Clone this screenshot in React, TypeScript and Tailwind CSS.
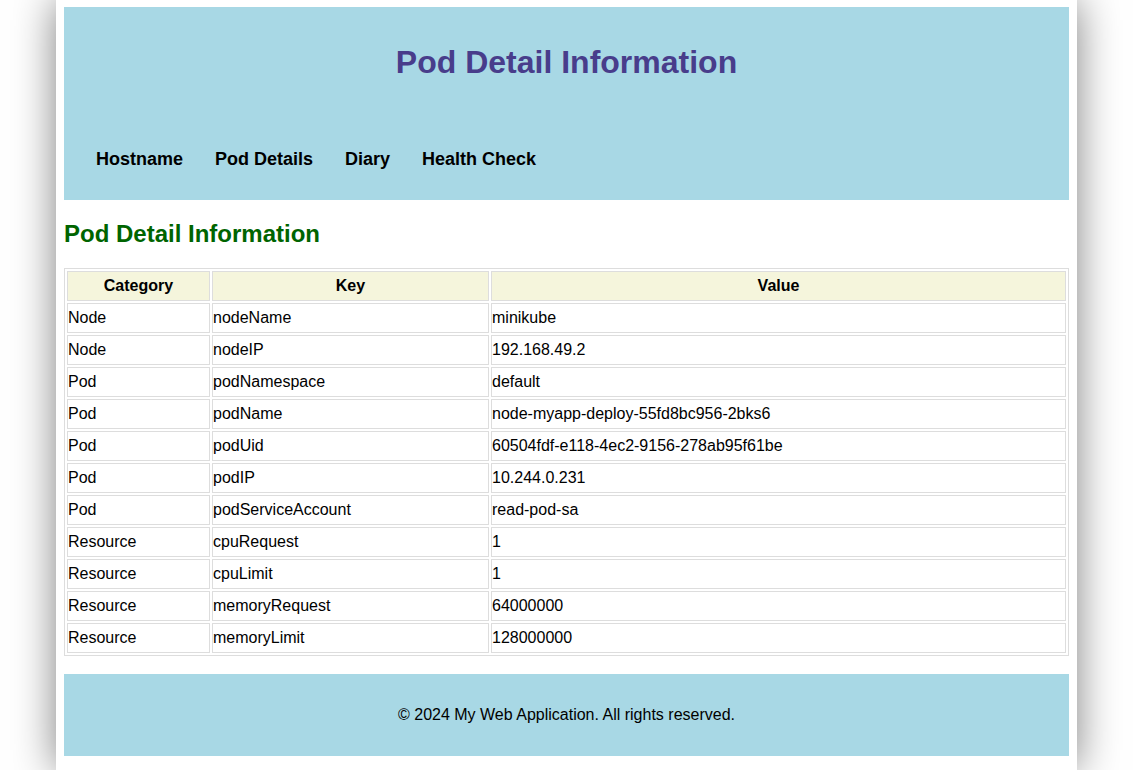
const rows: [string, string, string][] = [
  ["Node", "nodeName", "minikube"],
  ["Node", "nodeIP", "192.168.49.2"],
  ["Pod", "podNamespace", "default"],
  ["Pod", "podName", "node-myapp-deploy-55fd8bc956-2bks6"],
  ["Pod", "podUid", "60504fdf-e118-4ec2-9156-278ab95f61be"],
  ["Pod", "podIP", "10.244.0.231"],
  ["Pod", "podServiceAccount", "read-pod-sa"],
  ["Resource", "cpuRequest", "1"],
  ["Resource", "cpuLimit", "1"],
  ["Resource", "memoryRequest", "64000000"],
  ["Resource", "memoryLimit", "128000000"],
];

export default function App() {
  return (
    <div className="min-h-[770px] bg-white font-['Liberation_Sans',Arial,sans-serif] text-black">
      <div className="mx-auto min-h-[770px] w-[1021px] bg-white px-2 pt-[7px] shadow-[0_0_40px_rgba(0,0,0,0.5)]">
        {/* Header */}
        <header className="bg-[#a8d8e5] pt-[37px] pb-[30px]">
          <h1 className="text-center text-[32px] leading-[37px] font-bold text-[#483d8b]">
            Pod Detail Information
          </h1>
          <nav className="mt-[68px] flex gap-8 pl-8 text-[18px] leading-[21px] font-bold">
            <a href="#">Hostname</a>
            <a href="#">Pod Details</a>
            <a href="#">Diary</a>
            <a href="#">Health Check</a>
          </nav>
        </header>

        <h2 className="mt-5 text-[24px] leading-[28px] font-bold text-[#006400]">
          Pod Detail Information
        </h2>

        <table className="mt-5 w-full table-fixed border-separate border-spacing-[2px] border border-[#ddd] text-[16px] leading-[18px]">
          <thead>
            <tr>
              <th className="w-[143px] border border-[#ddd] bg-[#f5f5dc] py-[5px]">Category</th>
              <th className="w-[277px] border border-[#ddd] bg-[#f5f5dc] py-[5px]">Key</th>
              <th className="border border-[#ddd] bg-[#f5f5dc] py-[5px]">Value</th>
            </tr>
          </thead>
          <tbody>
            {rows.map(([cat, key, val]) => (
              <tr key={key}>
                <td className="border border-[#ddd] px-0 py-[5px]">{cat}</td>
                <td className="border border-[#ddd] px-0 py-[5px]">{key}</td>
                <td className="border border-[#ddd] px-0 py-[5px]">{val}</td>
              </tr>
            ))}
          </tbody>
        </table>

        {/* Footer */}
        <footer className="mt-[18px] bg-[#a8d8e5] py-8 text-center text-[16px] leading-[18px]">
          © 2024 My Web Application. All rights reserved.
        </footer>
      </div>
    </div>
  );
}
